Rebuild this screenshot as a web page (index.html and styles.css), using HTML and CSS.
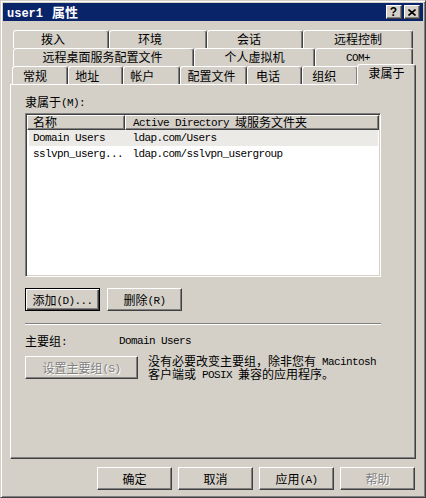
FILE: index.html
```html
<!DOCTYPE html>
<html lang="zh-CN">
<head>
    <meta charset="UTF-8">
    <title>user1 属性</title>
    <link rel="stylesheet" href="styles.css">
</head>
<body>
    <div class="window">
        <!-- Title bar -->
        <div class="titlebar">
            <span class="title"><span class="tm">user1</span><span class="tcn">属性</span></span>
            <span class="cbtn help">?</span>
            <span class="cbtn close">
                <svg width="8" height="7" viewBox="0 0 8 7"><path d="M0.5 0.5 L7.5 6.5 M7.5 0.5 L0.5 6.5" stroke="#000" stroke-width="1.6" fill="none"/></svg>
            </span>
        </div>

        <div class="content">
            <!-- Tab rows -->
            <div class="tabrow r1">
                <div class="tab">拨入</div>
                <div class="tab">环境</div>
                <div class="tab">会话</div>
                <div class="tab">远程控制</div>
            </div>
            <div class="tabrow r2">
                <div class="tab">远程桌面服务配置文件</div>
                <div class="tab">个人虚拟机</div>
                <div class="tab"><span class="m">COM+</span></div>
            </div>
            <div class="tabrow r3">
                <div class="tab">常规</div>
                <div class="tab">地址</div>
                <div class="tab">帐户</div>
                <div class="tab">配置文件</div>
                <div class="tab">电话</div>
                <div class="tab">组织</div>
                <div class="tab selected">隶属于</div>
            </div>

            <!-- Member of page -->
            <div class="panel">
                <div class="label">隶属于<span class="m">(M):</span></div>
                <div class="list">
                    <div class="list-head">
                        <div class="hcell c1">名称</div>
                        <div class="hcell c2"><span class="m">Active Directory </span>域服务文件夹</div>
                    </div>
                    <div class="row sel">
                        <div class="cell c1">Domain Users</div>
                        <div class="cell c2">ldap.com/Users</div>
                    </div>
                    <div class="row">
                        <div class="cell c1">sslvpn_userg...</div>
                        <div class="cell c2">ldap.com/sslvpn_usergroup</div>
                    </div>
                </div>

                <div class="btnrow">
                    <button class="btn default">添加<span class="m">(D)...</span></button>
                    <button class="btn">删除<span class="m">(R)</span></button>
                </div>

                <div class="sep"></div>

                <div class="primary">
                    <span class="plabel">主要组<span class="m">:</span></span>
                    <span class="pvalue">Domain Users</span>
                </div>

                <div class="setrow">
                    <button class="btn wide disabled">设置主要组<span class="m">(S)</span></button>
                    <div class="note">
                        <div class="line">没有必要改变主要组，除非您有<span class="m"> Macintosh</span></div>
                        <div class="line">客户端或<span class="m"> POSIX </span>兼容的应用程序。</div>
                    </div>
                </div>
            </div>

            <!-- Dialog buttons -->
            <div class="footer">
                <button class="btn">确定</button>
                <button class="btn">取消</button>
                <button class="btn">应用<span class="m">(A)</span></button>
                <button class="btn disabled">帮助</button>
            </div>
        </div>
    </div>
</body>
</html>
```

FILE: styles.css
```css
* {
    box-sizing: border-box;
}

body {
    margin: 0;
    background: #d4d0c8;
    font-family: "Noto Sans CJK SC", sans-serif;
    font-size: 12px;
    line-height: 14px;
    color: #000;
}

/* Latin text in the half-width style of the system font */
.m,
.cell,
.pvalue {
    font-family: "Liberation Mono", "Noto Sans CJK SC", monospace;
    font-size: 11px;
    letter-spacing: -0.6px;
}

.m {
    line-height: 10px;
    vertical-align: 1px;
}

.window {
    width: 426px;
    height: 498px;
    border: 1px solid;
    border-color: #d4d0c8 #404040 #404040 #d4d0c8;
    box-shadow: inset 1px 1px #fff, inset -1px -1px #808080;
    padding: 2px;
    display: flex;
    flex-direction: column;
}

/* Title bar */
.titlebar {
    height: 18px;
    background: #0a246a;
    color: #fff;
    display: flex;
    align-items: center;
    padding: 0 3px 0 3px;
}

.title {
    flex: 1;
    font-weight: bold;
    height: 16px;
    line-height: 16px;
    white-space: nowrap;
}

.tm {
    font-family: "Liberation Mono", monospace;
    font-size: 12px;
    line-height: 10px;
    font-weight: bold;
    padding-left: 1px;
}

.tcn {
    font-size: 13px;
    line-height: 10px;
    margin-left: 9px;
}

.cbtn {
    width: 16px;
    height: 14px;
    margin-left: 2px;
    background: #d4d0c8;
    border: 1px solid;
    border-color: #fff #404040 #404040 #fff;
    box-shadow: inset -1px -1px #808080;
    color: #000;
    display: flex;
    align-items: center;
    justify-content: center;
}

.cbtn.help {
    font-family: "Liberation Sans", sans-serif;
    font-weight: bold;
    font-size: 12px;
    line-height: 12px;
    padding-right: 1px;
}

.cbtn svg {
    display: block;
    margin-right: 1px;
}

.content {
    flex: 1;
    padding: 9px 7px 0 7px;
}

/* Tabs */
.tabrow {
    display: flex;
    height: 18px;
    padding-left: 3px;
}

.tabrow.r3 {
    padding-left: 2px;
}

.tab {
    height: 18px;
    border: 1px solid;
    border-bottom: none;
    border-color: #fff #404040 transparent #fff;
    border-radius: 3px 3px 0 0;
    box-shadow: inset -1px 0 #808080;
    background: #d4d0c8;
    text-align: center;
    line-height: 16px;
    white-space: nowrap;
}

.r1 .tab:nth-child(1) { width: 96px; padding-right: 16px; }
.r1 .tab:nth-child(2) { width: 98px; padding-right: 16px; }
.r1 .tab:nth-child(3) { width: 96px; padding-right: 12px; }
.r1 .tab:nth-child(4) { width: 110px; }

.r2 .tab:nth-child(1) { width: 181px; padding-right: 2px; }
.r2 .tab:nth-child(2) { width: 121px; }
.r2 .tab:nth-child(3) { width: 98px; padding-right: 12px; }

.r3 .tab { line-height: 18px; }
.r3 .tab:nth-child(1) { width: 56px; padding-right: 10px; }
.r3 .tab:nth-child(2) { width: 55px; padding-right: 16px; }
.r3 .tab:nth-child(3) { width: 57px; padding-right: 18px; }
.r3 .tab:nth-child(4) { width: 68px; padding-right: 4px; }
.r3 .tab:nth-child(5) { width: 55px; padding-right: 14px; }
.r3 .tab:nth-child(6) { width: 56px; padding-right: 12px; }

.tab.selected {
    width: 59px;
    height: 21px;
    margin-top: -2px;
    margin-left: -1px;
    line-height: 16px;
    position: relative;
    z-index: 1;
}

/* Page */
.panel {
    height: 375px;
    border: 1px solid;
    border-color: #fff #404040 #404040 #fff;
    box-shadow: inset -1px -1px #808080;
    padding: 10px 0 0 14px;
}

.label {
    height: 14px;
}

.list {
    width: 356px;
    height: 164px;
    margin-top: 4px;
    border: 1px solid;
    border-color: #808080 #fff #fff #808080;
    box-shadow: inset 1px 1px #404040, inset -1px -1px #d4d0c8;
    background: #fff;
    padding: 1px;
}

.list-head {
    display: flex;
    height: 15px;
}

.hcell {
    height: 15px;
    border: 1px solid;
    border-color: #fff #404040 #404040 #fff;
    box-shadow: inset -1px -1px #808080;
    background: #d4d0c8;
    line-height: 12px;
    padding-left: 5px;
    white-space: nowrap;
}

.c1 {
    width: 98px;
}

.c2 {
    width: 254px;
}

.hcell.c2 {
    padding-left: 7px;
}

.row {
    display: flex;
    height: 16px;
    margin: 0 1px 0 2px;
}

.row.sel {
    background: #eceae6;
}

.cell {
    white-space: nowrap;
    line-height: 17px;
    padding-left: 4px;
}

.cell.c1 {
    width: 97px;
}

.cell.c2 {
    padding-left: 7px;
}

/* Buttons */
.btn {
    width: 75px;
    height: 23px;
    margin: 0;
    padding: 0;
    background: #d4d0c8;
    border: 1px solid;
    border-color: #fff #404040 #404040 #fff;
    box-shadow: inset -1px -1px #808080;
    font-family: "Noto Sans CJK SC", sans-serif;
    font-size: 12px;
    line-height: 14px;
    color: #000;
}

.btn.default {
    border-color: #000;
    box-shadow: inset 1px 1px #fff, inset -1px -1px #404040, inset -2px -2px #808080;
}

.btn.disabled {
    color: #808080;
    text-shadow: 1px 1px #fff;
}

.btn.wide {
    width: 113px;
    flex-shrink: 0;
}

.btnrow {
    display: flex;
    gap: 7px;
    margin-top: 11px;
}

.sep {
    width: 356px;
    margin-top: 12px;
    border-top: 1px solid #808080;
    border-bottom: 1px solid #fff;
}

.primary {
    display: flex;
    height: 14px;
    margin-top: 9px;
}

.plabel {
    width: 94px;
}

.pvalue {
    line-height: 14px;
}

.setrow {
    display: flex;
    margin-top: 6px;
}

.setrow .btn {
    margin-top: 2px;
}

.note {
    margin-left: 10px;
    white-space: nowrap;
}

.note .line {
    height: 13px;
    line-height: 13px;
}

.footer {
    display: flex;
    justify-content: flex-end;
    gap: 6px;
    margin-top: 8px;
    padding-right: 1px;
}
```
